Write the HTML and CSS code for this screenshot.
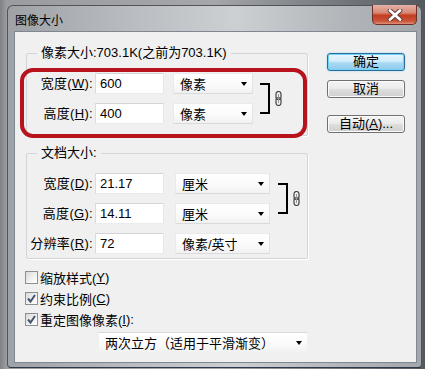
FILE: index.html
```html
<!DOCTYPE html>
<html lang="zh-CN">
<head>
    <meta charset="UTF-8">
    <title>图像大小</title>
    <link rel="stylesheet" href="styles.css">
</head>
<body>
    <div class="desk">
        <div class="window">
            <div class="titlebar">
                <span class="title">图像大小</span>
                <div class="close">
                    <svg width="16" height="12" viewBox="0 0 16 12">
                        <path d="M3 1.5 L13 10.5 M13 1.5 L3 10.5" stroke="#5a3a34" stroke-width="4.6" stroke-linecap="round"/>
                        <path d="M3 1.5 L13 10.5 M13 1.5 L3 10.5" stroke="#fff" stroke-width="2.8" stroke-linecap="round"/>
                    </svg>
                </div>
            </div>

            <div class="client">
                <div class="main">
                    <div class="group group-pixel">
                        <div class="group-title">像素大小:703.1K(之前为703.1K)</div>
                        <div class="fields">
                            <label class="lbl">宽度(<u>W</u>):</label>
                            <div class="input">600</div>
                            <div class="select">像素<i class="arrow"></i></div>
                            <div class="link">
                                <div class="bracket"></div>
                                <svg class="chain" width="7" height="15" viewBox="0 0 7 15">
                                    <rect x="1" y="0.5" width="5" height="8" rx="2.5" fill="none" stroke="#444" stroke-width="1.2"/>
                                    <rect x="1" y="6.5" width="5" height="8" rx="2.5" fill="none" stroke="#444" stroke-width="1.2"/>
                                    <line x1="3.5" y1="3" x2="3.5" y2="12" stroke="#999" stroke-width="1"/>
                                </svg>
                            </div>
                            <label class="lbl">高度(<u>H</u>):</label>
                            <div class="input">400</div>
                            <div class="select">像素<i class="arrow"></i></div>
                        </div>
                    </div>

                    <div class="group group-doc">
                        <div class="group-title">文档大小:</div>
                        <div class="fields">
                            <label class="lbl">宽度(<u>D</u>):</label>
                            <div class="input">21.17</div>
                            <div class="select">厘米<i class="arrow"></i></div>
                            <div class="link">
                                <div class="bracket"></div>
                                <svg class="chain" width="7" height="15" viewBox="0 0 7 15">
                                    <rect x="1" y="0.5" width="5" height="8" rx="2.5" fill="none" stroke="#444" stroke-width="1.2"/>
                                    <rect x="1" y="6.5" width="5" height="8" rx="2.5" fill="none" stroke="#444" stroke-width="1.2"/>
                                    <line x1="3.5" y1="3" x2="3.5" y2="12" stroke="#999" stroke-width="1"/>
                                </svg>
                            </div>
                            <label class="lbl">高度(<u>G</u>):</label>
                            <div class="input">14.11</div>
                            <div class="select">厘米<i class="arrow"></i></div>
                            <label class="lbl">分辨率(<u>R</u>):</label>
                            <div class="input">72</div>
                            <div class="select">像素/英寸<i class="arrow"></i></div>
                        </div>
                    </div>

                    <div class="checks">
                        <div class="check"><span class="box"></span>缩放样式(<u>Y</u>)</div>
                        <div class="check"><span class="box"><svg width="11" height="11" viewBox="0 0 11 11"><path d="M2 5.5 L4.5 8.5 L9 2" fill="none" stroke="#46556f" stroke-width="2"/></svg></span>约束比例(<u>C</u>)</div>
                        <div class="check"><span class="box"><svg width="11" height="11" viewBox="0 0 11 11"><path d="M2 5.5 L4.5 8.5 L9 2" fill="none" stroke="#46556f" stroke-width="2"/></svg></span>重定图像像素(<u>I</u>):</div>
                    </div>

                    <div class="select select-wide">两次立方（适用于平滑渐变）<i class="arrow"></i></div>
                </div>

                <div class="buttons">
                    <div class="btn btn-default">确定</div>
                    <div class="btn btn-cancel">取消</div>
                    <div class="btn btn-auto">自动(<u>A</u>)...</div>
                </div>

                <div class="mark"></div>
            </div>
        </div>
    </div>
</body>
</html>
```

FILE: styles.css
```css
* {
    box-sizing: border-box;
}

body {
    margin: 0;
    font-family: "Liberation Sans", "Noto Sans CJK SC", sans-serif;
    font-size: 13px;
    color: #000;
}

.desk {
    width: 425px;
    height: 369px;
    padding: 5px 3px 0 7px;
    background: linear-gradient(90deg, #7f8184 0%, #9a9c9f 1.5%, #a4a6a9 50%, #55595f 100%);
}

.window {
    width: 415px;
    height: 363px;
    border: 1px solid #50555c;
    border-bottom-color: #2c3a4e;
    border-radius: 6px 6px 4px 4px;
    padding: 0 4px 4px 6px;
    background: linear-gradient(90deg, #9ea2a7 0%, #b9bcc0 30%, #cdd0d3 55%, #b3b6ba 80%, #a3a7ab 100%);
}

.titlebar {
    height: 25px;
    display: flex;
    justify-content: space-between;
    align-items: flex-start;
}

.title {
    padding: 6px 0 0 1px;
    line-height: 16px;
    font-size: 12px;
    font-family: "Noto Sans CJK SC", sans-serif;
}

.close {
    width: 45px;
    height: 20px;
    margin-top: -1px;
    border: 1px solid #6e3026;
    border-top: none;
    border-radius: 0 0 5px 5px;
    background: linear-gradient(#e4b2a6 0%, #d88a78 40%, #c53d22 55%, #c8553a 85%, #dd9278 100%);
    display: flex;
    justify-content: center;
    align-items: center;
}

.client {
    position: relative;
    height: 332px;
    border: 1px solid #7f8891;
    background: #f0f0f0;
    padding: 21px 0 0 11px;
    display: flex;
}

.main {
    width: 282px;
}

.group {
    border: 1px solid #d0d5d9;
    border-radius: 2px;
    box-shadow: 1px 1px 0 #fff;
}

.group-pixel {
    padding-bottom: 11px;
}

.group-doc {
    margin-top: 17px;
    padding-bottom: 4px;
}

.group-title {
    display: table;
    margin: -9px 0 0 10px;
    padding: 0 4px;
    line-height: 16px;
    background: #f0f0f0;
}

.fields {
    display: grid;
    grid-template-columns: 66px 69px max-content max-content;
    justify-content: start;
    grid-auto-rows: 21px;
    column-gap: 2px;
    row-gap: 9px;
    margin-top: 12px;
    align-items: center;
}

.lbl {
    justify-self: end;
    line-height: 21px;
    white-space: nowrap;
    letter-spacing: 0.3px;
}

.input {
    height: 21px;
    background: #fff;
    border: 1px solid;
    border-color: #d2d4d6 #e6e7e8 #eaebec #dadcde;
    padding: 0 4px;
    line-height: 19px;
}

.select {
    height: 21px;
    display: flex;
    justify-content: space-between;
    align-items: center;
    padding: 0 5px 0 6px;
    background: linear-gradient(#fff, #fafafa 60%, #f1f1f1);
    border: 1px solid;
    border-color: #e9eaeb #e2e3e4 #d9dadb #e9eaeb;
    white-space: nowrap;
}

.group-pixel .select {
    width: 80px;
    margin-left: 7px;
}

.group-doc .select {
    width: 95px;
    margin-left: 9px;
}

.arrow {
    width: 0;
    height: 0;
    border-left: 3.5px solid transparent;
    border-right: 3.5px solid transparent;
    border-top: 4px solid #000;
}

.link {
    grid-column: 4;
    grid-row: 1 / span 2;
    align-self: stretch;
    display: flex;
    align-items: center;
}

.group-pixel .link {
    margin-left: 5px;
}

.group-doc .link {
    margin-left: 6px;
}

.bracket {
    width: 10px;
    align-self: stretch;
    margin: 10px 0;
    border: 2px solid #000;
    border-left: none;
}

.chain {
    margin-left: 5px;
}

.checks {
    margin: 8px 0 0 -1px;
}

.check {
    height: 21px;
    display: flex;
    align-items: center;
    white-space: nowrap;
}

.box {
    width: 13px;
    height: 13px;
    margin-right: 2px;
    border: 1px solid #8e8f8f;
    background: linear-gradient(135deg, #d9dadb, #f7f7f7 70%, #fff);
    display: flex;
    justify-content: center;
    align-items: center;
}

.select-wide {
    width: 210px;
    margin: 2px 0 0 72px;
    border-color: #d8d9da #f0f0f0 #f0f0f0 #f0f0f0;
}

.buttons {
    margin-left: 19px;
    width: 78px;
}

.btn {
    height: 18px;
    line-height: 16px;
    text-align: center;
    border: 1px solid #707070;
    border-radius: 3px;
    background: linear-gradient(#f4f4f4 0%, #ececec 45%, #dcdcdc 55%, #d0d0d0 100%);
    box-shadow: inset 0 0 0 1px #fbfbfb;
}

.btn-default {
    border-color: #2d6c98;
    background: linear-gradient(#eaf6fd 0%, #d2edfb 45%, #a9daf5 55%, #8fcaeb 100%);
    box-shadow: inset 0 0 0 1px #6fd3f6, 0 0 2px #8fd6f5;
}

.btn-cancel {
    margin-top: 9px;
}

.btn-auto {
    margin-top: 17px;
}

.mark {
    position: absolute;
    left: 5px;
    top: 36px;
    width: 287px;
    height: 70px;
    border: 4px solid #b8121d;
    border-radius: 13px;
}
```
